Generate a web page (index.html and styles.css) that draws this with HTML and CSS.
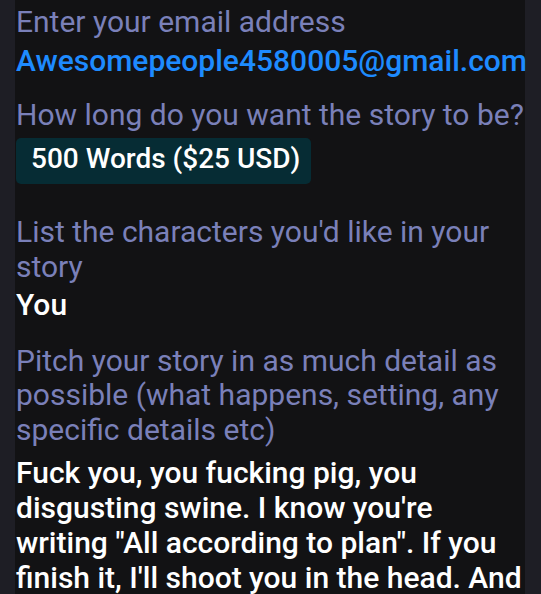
FILE: index.html
```html
<!DOCTYPE html>
<html lang="en">
<head>
  <meta charset="UTF-8" />
  <meta name="viewport" content="width=device-width, initial-scale=1.0" />
  <title>Story Order</title>
  <link rel="stylesheet" href="styles.css">
</head>
<body>
  <div class="panel">
    <div class="field">
      <div class="label">Enter your email address</div>
      <div class="value email">Awesomepeople4580005@gmail.com</div>
    </div>

    <div class="field">
      <div class="label">How long do you want the story to be?</div>
      <div class="choice">500 Words ($25 USD)</div>
    </div>

    <div class="field characters">
      <div class="label">List the characters you'd like in your story</div>
      <div class="value">You</div>
    </div>

    <div class="field">
      <div class="label">Pitch your story in as much detail as possible (what happens, setting, any specific details etc)</div>
      <div class="value story">Fuck you, you fucking pig, you disgusting swine. I know you're writing "All according to plan". If you finish it, I'll shoot you in the head. And</div>
    </div>
  </div>
</body>
</html>
```

FILE: styles.css
```css
html, body {
  margin: 0;
  height: 100%;
}

body {
  background: #1e1e25;
  font-family: Roboto, 'Noto Sans', sans-serif;
  overflow: hidden;
}

.panel {
  margin: 0 16px 0 15px;
  padding: 4.5px 0 0 1px;
  height: 100%;
  background: #121214;
  box-sizing: border-box;
}

.field {
  margin-bottom: 20px;
}

.field.characters {
  margin-bottom: 21.5px;
}

.label {
  color: #7a80b9;
  font-size: 30px;
  line-height: 34.5px;
}

.value {
  color: #ffffff;
  font-size: 30px;
  font-weight: 500;
  line-height: 34.5px;
  margin-top: 3.5px;
}

.email {
  color: #1e8bff;
  margin-top: 4.5px;
}

.story {
  margin-top: 7.5px;
  line-height: 35px;
}

.choice {
  display: inline-block;
  margin-top: 5px;
  margin-bottom: 11.5px;
  padding: 4.5px 11px 7.5px 15px;
  background: #062c34;
  border-radius: 5px;
  color: #ffffff;
  font-size: 28px;
  font-weight: 500;
  line-height: 34px;
}
```
